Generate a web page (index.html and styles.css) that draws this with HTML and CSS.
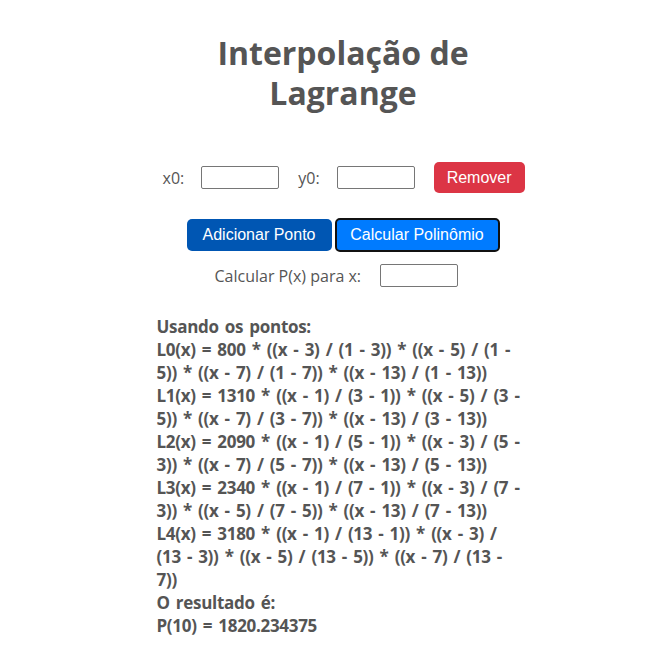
FILE: index.html
```html
<!DOCTYPE html>
<html lang="pt">
<head>
<meta charset="utf-8">
<title>Interpolação de Lagrange</title>
<link rel="stylesheet" href="styles.css">
</head>
<body>
<div class="app">
  <h1 class="title">Interpolação de Lagrange</h1>
  <div class="point-row">
    <label class="lbl lbl-x">x0:</label>
    <input class="field" type="text">
    <label class="lbl lbl-y">y0:</label>
    <input class="field" type="text">
    <button class="btn btn-red">Remover</button>
  </div>
  <div class="action-row">
    <button class="btn btn-dark">Adicionar Ponto</button>
    <button class="btn btn-blue">Calcular Polinômio</button>
  </div>
  <div class="eval-row">
    <label class="lbl lbl-eval">Calcular P(x) para x:</label>
    <input class="field" type="text">
  </div>
  <div class="result">
    <div>Usando os pontos:</div>
    <div>L0(x) = 800 * ((x - 3) / (1 - 3)) * ((x - 5) / (1 - 5)) * ((x - 7) / (1 - 7)) * ((x - 13) / (1 - 13))</div>
    <div>L1(x) = 1310 * ((x - 1) / (3 - 1)) * ((x - 5) / (3 - 5)) * ((x - 7) / (3 - 7)) * ((x - 13) / (3 - 13))</div>
    <div>L2(x) = 2090 * ((x - 1) / (5 - 1)) * ((x - 3) / (5 - 3)) * ((x - 7) / (5 - 7)) * ((x - 13) / (5 - 13))</div>
    <div>L3(x) = 2340 * ((x - 1) / (7 - 1)) * ((x - 3) / (7 - 3)) * ((x - 5) / (7 - 5)) * ((x - 13) / (7 - 13))</div>
    <div>L4(x) = 3180 * ((x - 1) / (13 - 1)) * ((x - 3) / (13 - 3)) * ((x - 5) / (13 - 5)) * ((x - 7) / (13 - 7))</div>
    <div>O resultado é:</div>
    <div>P(10) = 1820.234375</div>
  </div>
</div>
</body>
</html>
```
FILE: styles.css
```css
html, body {
  margin: 0;
  padding: 0;
  background: #ffffff;
}

body {
  font-family: "Open Sans", "Noto Sans", sans-serif;
  color: #555555;
}

.app {
  width: 373px;
  margin: 0 auto;
  padding-left: 14px;
  padding-top: 33px;
}

.title {
  margin: 0;
  font-size: 32px;
  line-height: 40px;
  font-weight: 700;
  text-align: center;
  color: #555555;
}

.point-row {
  display: flex;
  align-items: center;
  justify-content: flex-start;
  margin-top: 49px;
  padding-left: 6px;
  height: 31px;
}

.lbl {
  font-size: 16px;
  color: #555555;
}

.lbl-x {
  margin-right: 17px;
}

.lbl-y {
  margin-left: 19px;
  margin-right: 17px;
}

.field {
  box-sizing: border-box;
  width: 78px;
  height: 23px;
  border: 1px solid #767676;
  border-radius: 2px;
  padding: 1px 2px;
  background: #fff;
  font-size: 13px;
}

.btn {
  box-sizing: border-box;
  font-family: "Liberation Sans", Arial, sans-serif;
  font-size: 16px;
  color: #ffffff;
  border: 0;
  border-radius: 5px;
  padding: 0;
  cursor: pointer;
}

.btn-red {
  margin-left: 19px;
  height: 31px;
  width: 91px;
  background: #dc3545;
}

.action-row {
  display: flex;
  align-items: center;
  gap: 3px;
  margin-top: 25px;
  padding-left: 30px;
}

.btn-dark {
  height: 32px;
  width: 145px;
  background: #0056b3;
}

.btn-blue {
  height: 34px;
  width: 165px;
  background: #007bff;
  border: 2px solid #111111;
}

.eval-row {
  display: flex;
  align-items: center;
  margin-top: 12px;
  padding-left: 58px;
}

.lbl-eval {
  margin-right: 19px;
}

.result {
  width: 364px;
  margin-top: 28px;
  font-size: 17px;
  line-height: 23px;
  letter-spacing: -0.3px;
  word-spacing: 2px;
  font-weight: 700;
  color: #555555;
}
```
